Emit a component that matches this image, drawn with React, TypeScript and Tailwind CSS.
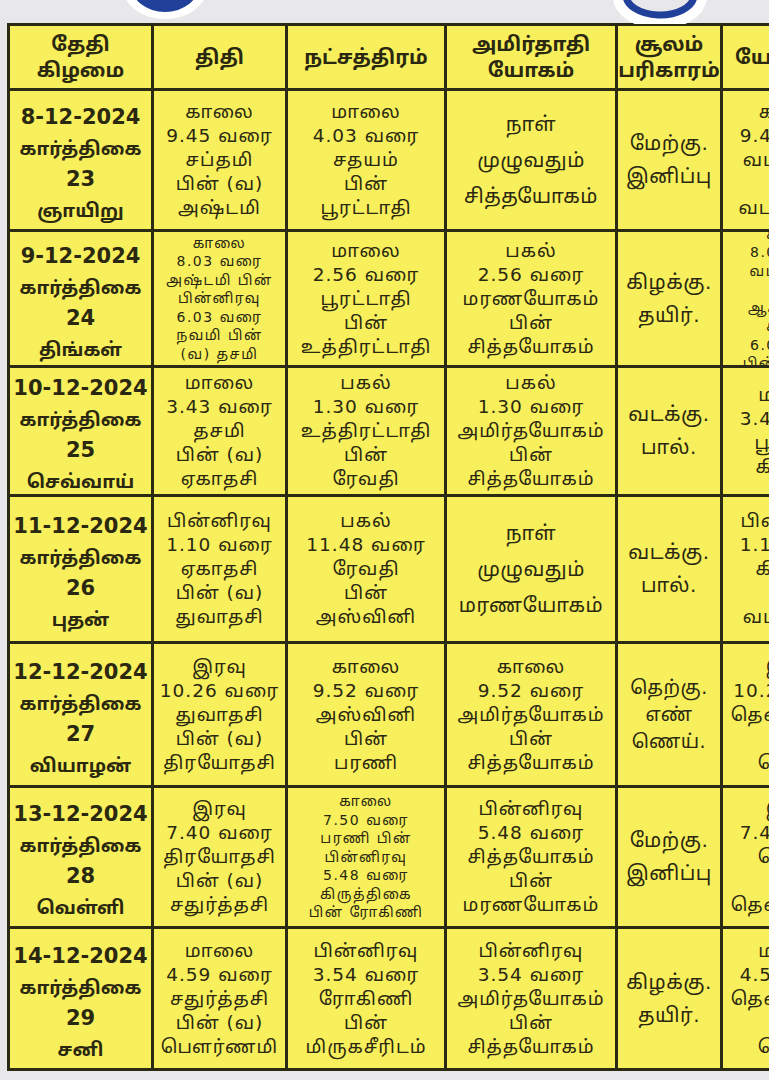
import React from 'react';

type Cell = { lines: string[]; cls?: string };

const TA = "font-['DejaVu_Sans','Noto_Sans_Tamil','Lohit_Tamil','Noto_Sans',sans-serif]";

const head: Cell[] = [
  { lines: ['தேதி', 'கிழமை'] },
  { lines: ['திதி'] },
  { lines: ['நட்சத்திரம்'] },
  { lines: ['அமிர்தாதி', 'யோகம்'] },
  { lines: ['சூலம்', 'பரிகாரம்'] },
  { lines: ['யோகினி'], cls: 'items-start pl-[12px]' },
];

const norm = 'text-[18.5px] leading-[24px] tracking-[1px]';
const small = 'text-[14px] leading-[18.5px] tracking-[1.5px]';
const wide = 'text-[20px] leading-[36px] tracking-[0.5px]';
const sul = 'text-[20px] leading-[33px] tracking-[0.5px]';

const rows: Cell[][] = [
  [
    { lines: ['8-12-2024', 'கார்த்திகை', '23', 'ஞாயிறு'] },
    { lines: ['காலை', '9.45 வரை', 'சப்தமி', 'பின் (வ)', 'அஷ்டமி'], cls: norm },
    { lines: ['மாலை', '4.03 வரை', 'சதயம்', 'பின்', 'பூரட்டாதி'], cls: norm },
    { lines: ['நாள்', 'முழுவதும்', 'சித்தயோகம்'], cls: wide },
    { lines: ['மேற்கு.', 'இனிப்பு'], cls: sul },
    { lines: ['காலை', '9.45 வரை', 'வடமேற்கு', 'பின்', 'வடகிழக்கு'], cls: norm },
  ],
  [
    { lines: ['9-12-2024', 'கார்த்திகை', '24', 'திங்கள்'] },
    { lines: ['காலை', '8.03 வரை', 'அஷ்டமி பின்', 'பின்னிரவு', '6.03 வரை', 'நவமி பின்', '(வ) தசமி'], cls: small },
    { lines: ['மாலை', '2.56 வரை', 'பூரட்டாதி', 'பின்', 'உத்திரட்டாதி'], cls: norm },
    { lines: ['பகல்', '2.56 வரை', 'மரணயோகம்', 'பின்', 'சித்தயோகம்'], cls: norm },
    { lines: ['கிழக்கு.', 'தயிர்.'], cls: sul },
    { lines: ['காலை', '8.03 வரை', 'வடகிழக்கு', 'பின்', 'ஆக்னேயம்', 'காலை', '6.03 வரை', 'பின் கிழக்கு'], cls: small },
  ],
  [
    { lines: ['10-12-2024', 'கார்த்திகை', '25', 'செவ்வாய்'] },
    { lines: ['மாலை', '3.43 வரை', 'தசமி', 'பின் (வ)', 'ஏகாதசி'], cls: norm },
    { lines: ['பகல்', '1.30 வரை', 'உத்திரட்டாதி', 'பின்', 'ரேவதி'], cls: norm },
    { lines: ['பகல்', '1.30 வரை', 'அமிர்தயோகம்', 'பின்', 'சித்தயோகம்'], cls: norm },
    { lines: ['வடக்கு.', 'பால்.'], cls: sul },
    { lines: ['மாலை', '3.43 வரை', 'பூமிக்கு', 'கிழக்கு'], cls: norm },
  ],
  [
    { lines: ['11-12-2024', 'கார்த்திகை', '26', 'புதன்'] },
    { lines: ['பின்னிரவு', '1.10 வரை', 'ஏகாதசி', 'பின் (வ)', 'துவாதசி'], cls: norm },
    { lines: ['பகல்', '11.48 வரை', 'ரேவதி', 'பின்', 'அஸ்வினி'], cls: norm },
    { lines: ['நாள்', 'முழுவதும்', 'மரணயோகம்'], cls: wide },
    { lines: ['வடக்கு.', 'பால்.'], cls: sul },
    { lines: ['பின்னிரவு', '1.10 வரை', 'கிழக்கு', 'பின்', 'வடமேற்கு'], cls: norm },
  ],
  [
    { lines: ['12-12-2024', 'கார்த்திகை', '27', 'வியாழன்'] },
    { lines: ['இரவு', '10.26 வரை', 'துவாதசி', 'பின் (வ)', 'திரயோதசி'], cls: norm },
    { lines: ['காலை', '9.52 வரை', 'அஸ்வினி', 'பின்', 'பரணி'], cls: norm },
    { lines: ['காலை', '9.52 வரை', 'அமிர்தயோகம்', 'பின்', 'சித்தயோகம்'], cls: norm },
    { lines: ['தெற்கு.', 'எண்', 'ணெய்.'], cls: 'text-[19px] leading-[27px] tracking-[0.5px]' },
    { lines: ['இரவு', '10.26 வரை', 'தென்மேற்கு', 'பின்', 'தெற்கு'], cls: norm },
  ],
  [
    { lines: ['13-12-2024', 'கார்த்திகை', '28', 'வெள்ளி'] },
    { lines: ['இரவு', '7.40 வரை', 'திரயோதசி', 'பின் (வ)', 'சதுர்த்தசி'], cls: norm },
    { lines: ['காலை', '7.50 வரை', 'பரணி பின்', 'பின்னிரவு', '5.48 வரை', 'கிருத்திகை', 'பின் ரோகிணி'], cls: small },
    { lines: ['பின்னிரவு', '5.48 வரை', 'சித்தயோகம்', 'பின்', 'மரணயோகம்'], cls: norm },
    { lines: ['மேற்கு.', 'இனிப்பு'], cls: sul },
    { lines: ['இரவு', '7.40 வரை', 'தெற்கு', 'பின்', 'தென்மேற்கு'], cls: norm },
  ],
  [
    { lines: ['14-12-2024', 'கார்த்திகை', '29', 'சனி'] },
    { lines: ['மாலை', '4.59 வரை', 'சதுர்த்தசி', 'பின் (வ)', 'பௌர்ணமி'], cls: norm },
    { lines: ['பின்னிரவு', '3.54 வரை', 'ரோகிணி', 'பின்', 'மிருகசீரிடம்'], cls: norm },
    { lines: ['பின்னிரவு', '3.54 வரை', 'அமிர்தயோகம்', 'பின்', 'சித்தயோகம்'], cls: norm },
    { lines: ['கிழக்கு.', 'தயிர்.'], cls: sul },
    { lines: ['மாலை', '4.59 வரை', 'தென்மேற்கு', 'பின்', 'தெற்கு'], cls: norm },
  ],
];

// date line is digits, drawn bigger than the tamil lines under it
const isDigits = (s: string) => /^[0-9-]+$/.test(s);

function Box({ cell, first, header }: { cell: Cell; first?: boolean; header?: boolean }) {
  const text = header
    ? `text-[20px] leading-[26px] font-bold ${cell.cls ?? 'items-center'}`
    : first
      ? 'leading-[31px] font-bold items-center pt-[8px]'
      : `items-center ${cell.cls ?? norm}`;
  return (
    <div className={`flex flex-col justify-center overflow-hidden bg-[#f8ef5c] text-center text-[#2a2810] ${text}`}>
      {cell.lines.map((l, i) => (
        <div
          key={i}
          className={`whitespace-nowrap ${first ? (isDigits(l) ? 'text-[21px]' : 'text-[18.5px]') : ''}`}
        >
          {l}
        </div>
      ))}
    </div>
  );
}

export default function App() {
  return (
    <div className={`relative h-[1080px] w-[769px] overflow-hidden bg-[#e8e8ea] ${TA}`}>
      {/* bits of the heading cut off above */}
      <svg className="absolute left-0 top-0" width="769" height="24" viewBox="0 0 769 24">
        <ellipse cx="165" cy="-12" rx="42" ry="31" fill="#ffffff" />
        <ellipse cx="165" cy="-15" rx="34" ry="27" fill="#20409a" />
        <path d="M620 -6 A40 26 0 0 0 700 -2" fill="none" stroke="#ffffff" strokeWidth="14" />
        <path d="M626 -6 A34 20 0 0 0 694 -4" fill="none" stroke="#20409a" strokeWidth="7" />
      </svg>
      <div className="pl-[7px] pt-[23px]">
        <div className="w-[860px] border-[3px] border-[#2b2a12] bg-[#2b2a12]">
          <div className="grid grid-cols-[141px_131px_156px_168px_102px_140px] grid-rows-[62px_138px_133px_126px_144px_141px_138px_139px] gap-[3px]">
            {head.map((c, i) => (
              <Box key={`h${i}`} cell={c} header />
            ))}
            {rows.map((r, ri) =>
              r.map((c, ci) => <Box key={`${ri}-${ci}`} cell={c} first={ci === 0} />),
            )}
          </div>
        </div>
      </div>
    </div>
  );
}
